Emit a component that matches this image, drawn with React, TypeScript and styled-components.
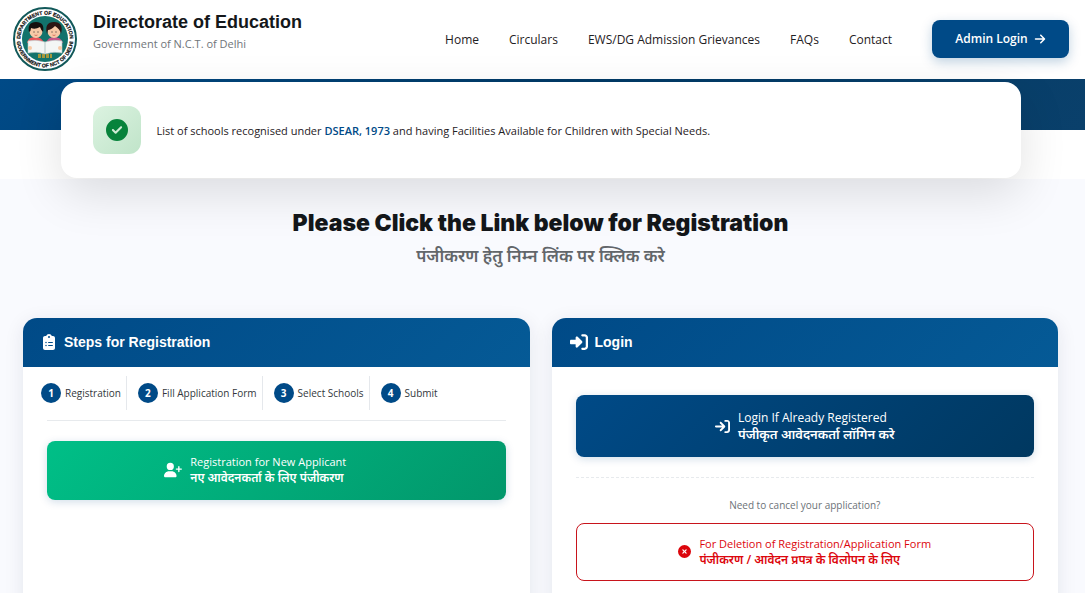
import React from 'react';
import styled, { createGlobalStyle } from 'styled-components';
import {
  FaArrowRight,
  FaArrowRightToBracket,
  FaCircleCheck,
  FaCircleXmark,
  FaClipboardList,
  FaRightToBracket,
  FaUserPlus,
} from 'react-icons/fa6';

const uiFont = '"Open Sans", "Noto Sans Devanagari", sans-serif';
const headingFont = '"Liberation Sans", Arial, sans-serif';

const GlobalStyle = createGlobalStyle`
  * { box-sizing: border-box; }
  body {
    margin: 0;
    background: #f9fafe;
    color: #1f2124;
    font-family: ${uiFont};
    font-size: 12px;
    line-height: 16px;
  }
  h1, h2, p, ol { margin: 0; padding: 0; }
  a { color: inherit; text-decoration: none; }
  button { font-family: inherit; cursor: pointer; }
  svg { flex: none; }
`;

const Header = styled.header`
  display: flex;
  align-items: center;
  justify-content: space-between;
  height: 79px;
  padding: 0 16px 2px 12px;
  background: #fff;
`;

const Brand = styled.a`
  display: flex;
  align-items: center;
  gap: 15px;
`;

const BrandText = styled.span`
  display: flex;
  flex-direction: column;
  padding-bottom: 14px;
`;

const BrandName = styled.span`
  font: 700 18px/24px ${headingFont};
  color: #14171a;
`;

const BrandSub = styled.span`
  font-size: 11px;
  line-height: 20px;
  font-weight: 500;
  color: #70757a;
`;

const Nav = styled.nav`
  display: flex;
  align-items: center;
  gap: 30px;
  font-weight: 500;

  a { padding-top: 2px; }
`;

const AdminButton = styled.button`
  display: flex;
  align-items: center;
  justify-content: center;
  gap: 6px;
  width: 137px;
  height: 38px;
  margin-left: 10px;
  border: 0;
  border-radius: 8px;
  background: #004a87;
  color: #fff;
  font-size: 12px;
  font-weight: 600;
  box-shadow: 0 4px 12px rgba(0, 74, 135, 0.25);
`;

const Hero = styled.section`
  padding: 3px 4px 1px 0;
  background: linear-gradient(135deg, #004a87 0%, #003a66 50%, #0a406b 100%) top / 100% 51px no-repeat #fff;
`;

const Notice = styled.div`
  position: relative;
  display: flex;
  align-items: center;
  gap: 16px;
  max-width: 960px;
  height: 96px;
  margin: 0 auto;
  padding: 0 32px;
  border-radius: 16px;
  background: #fff;
  font-size: 11px;
  font-weight: 500;
  box-shadow: 0 16px 48px rgba(0, 0, 0, 0.12);

  p { padding-top: 2px; }
  a { color: #004a87; font-weight: 600; }
`;

const NoticeIcon = styled.span`
  display: grid;
  place-items: center;
  width: 48px;
  height: 48px;
  border-radius: 12px;
  background: linear-gradient(135deg, #dcf3e1, #c0e4c9);
  color: #07833b;
`;

const Main = styled.main`
  padding: 32px 27px 32px 23px;
`;

const Title = styled.h1`
  font: 900 23px/24px Inter, "Arial Black", sans-serif;
  text-align: center;
  color: #14171a;
`;

const Subtitle = styled.p`
  margin-top: 7px;
  font-size: 17px;
  line-height: 28px;
  font-weight: 600;
  text-align: center;
  color: #62666a;
`;

const Columns = styled.div`
  display: grid;
  grid-template-columns: 1fr 1fr;
  gap: 22px;
  margin-top: 48px;
`;

const Card = styled.section`
  min-height: 320px;
  overflow: hidden;
  border-radius: 14px;
  background: #fff;
  box-shadow: 0 4px 20px rgba(0, 30, 70, 0.09);
`;

const CardHead = styled.h2`
  display: flex;
  align-items: center;
  gap: 7px;
  height: 49px;
  padding: 0 18px 1px;
  background: linear-gradient(135deg, #004a87, #055a96);
  color: #fff;
  font: 700 14px/20px ${headingFont};
`;

const CardBody = styled.div<{ $top: number }>`
  display: flex;
  flex-direction: column;
  padding: ${(p) => p.$top}px 24px 24px;
`;

const Steps = styled.ol`
  display: flex;
  margin: 0 -6px;
  list-style: none;
`;

const Step = styled.li`
  display: flex;
  align-items: center;
  gap: 4px;
  height: 34px;
  padding-right: 5px;
  font-size: 10px;
  color: #33373b;

  & + & {
    padding-left: 11px;
    border-left: 1px solid #e5e8ec;
  }
`;

const StepNumber = styled.span`
  display: grid;
  place-items: center;
  width: 20px;
  height: 20px;
  border-radius: 50%;
  background: #004a87;
  color: #fff;
  font-weight: 700;
`;

const Divider = styled.hr<{ $dashed?: boolean }>`
  width: 100%;
  margin: ${(p) => (p.$dashed ? '20px 0 19px' : '10px 0 20px')};
  border: 0;
  border-top: 1px ${(p) => (p.$dashed ? 'dashed' : 'solid')} #e7eaed;
`;

const tones = {
  green: 'padding: 0 42px 2px 0; border: 0; background: linear-gradient(135deg, #00bf87, #02976b); color: #fff; height: 59px; font-size: 11px; font-weight: 500;',
  blue: 'padding: 0; border: 0; background: linear-gradient(135deg, #004a87, #003860); color: #fff; height: 62px; font-size: 12px; font-weight: 500;',
  red: 'padding: 0 0 1px; border: 1px solid #c8141c; background: #fff; color: #dc060c; height: 58px; font-size: 11px; font-weight: 500;',
};

const ActionButton = styled.button<{ $tone: keyof typeof tones }>`
  display: flex;
  align-items: center;
  justify-content: center;
  gap: 8px;
  width: 100%;
  border-radius: 8px;
  text-align: left;
  line-height: 16px;
  ${(p) => tones[p.$tone]}
  ${(p) => p.$tone !== 'red' && 'box-shadow: 0 2px 8px rgba(0, 74, 135, 0.18);'}
`;

const Lines = styled.span`
  display: flex;
  flex-direction: column;
`;

const Hindi = styled.span<{ $size: number }>`
  font-size: ${(p) => p.$size}px;
  font-weight: 600;
`;

const Hint = styled.p`
  margin-bottom: 10px;
  font-size: 10px;
  text-align: center;
  color: #6c7278;
`;

const EmblemArt = styled.svg`
  overflow: visible;
`;

const Emblem = () => (
  <EmblemArt width="66" height="66" viewBox="0 0 66 66" role="img" aria-label="Department of Education emblem">
    <defs>
      <path id="ringTop" d="M9.500 41 A24.7 24.7 0 1 1 56.500 41" />
      <path id="ringBottom" d="M4.700 33 A28.3 28.3 0 0 0 61.300 33" />
    </defs>
    <circle cx="33" cy="33" r="31" fill="#fff" stroke="#12595a" strokeWidth="2" />
    <circle cx="33" cy="33" r="23" fill="#12736c" />
    <g fontFamily="Liberation Sans, sans-serif" fontWeight="700" fontSize="5.200" fill="#111" stroke="#111" strokeWidth=".2">
      <text textAnchor="middle"><textPath href="#ringTop" startOffset="50%">DEPARTMENT OF EDUCATION</textPath></text>
      <text textAnchor="middle"><textPath href="#ringBottom" startOffset="50%">GOVERNMENT OF NCT OF DELHI</textPath></text>
    </g>
    <path d="M15 37 Q16 31 23 31 Q30 31 32 37 Z" fill="#e8555a" />
    <path d="M34 37 Q36 31 42 31 Q49 31 51 37 Z" fill="#c65788" />
    <circle cx="24" cy="25.500" r="6.500" fill="#f7c9a6" />
    <circle cx="42" cy="25.500" r="6.500" fill="#f7c9a6" />
    <path d="M17 26 Q15 16 24 16 Q33 16 31 26 Q29 24 28 21 Q23 24 19 22 Q19 25 17 26 Z" fill="#16110f" />
    <path d="M35 28 Q32 16 42 16 Q52 16 49 28 Q48 23 43 20 Q39 24 36 24 Z" fill="#2c1614" />
    <path d="M21.500 26 h1 M25.500 26 h1 M39.500 26 h1 M43.500 26 h1" stroke="#222" />
    <path d="M22.500 29 q1.500 1 3 0 M40.500 29 q1.500 1 3 0" stroke="#cc5148" fill="none" strokeWidth=".7" />
    <path d="M16 35 Q25 33 33 36 V48 Q25 45 16 47 Z M33 36 Q42 33 50 35 V47 Q42 45 33 48 Z" fill="#f4f6f5" stroke="#bac9c8" strokeWidth=".6" />
    <circle cx="18" cy="42" r="2" fill="#f7c9a6" />
    <circle cx="48" cy="42" r="2" fill="#f7c9a6" />
    <path d="M26 49 h14 M26 51 h14" stroke="#d8a52c" strokeWidth="1.500" strokeDasharray="3 1" />
  </EmblemArt>
);

export default function App() {
  return (
    <>
      <GlobalStyle />
      <Header>
        <Brand href="#">
          <Emblem />
          <BrandText>
            <BrandName>Directorate of Education</BrandName>
            <BrandSub>Government of N.C.T. of Delhi</BrandSub>
          </BrandText>
        </Brand>
        <Nav>
          <a href="#">Home</a>
          <a href="#">Circulars</a>
          <a href="#">EWS/DG Admission Grievances</a>
          <a href="#">FAQs</a>
          <a href="#">Contact</a>
          <AdminButton type="button">
            Admin Login <FaArrowRight size={12} />
          </AdminButton>
        </Nav>
      </Header>
      <Hero>
        <Notice>
          <NoticeIcon><FaCircleCheck size={22} /></NoticeIcon>
          <p>
            List of schools recognised under <a href="#">DSEAR, 1973</a> and having Facilities Available for Children with Special Needs.
          </p>
        </Notice>
      </Hero>
      <Main>
        <Title>Please Click the Link below for Registration</Title>
        <Subtitle lang="hi">पंजीकरण हेतु निम्न लिंक पर क्लिक करे</Subtitle>
        <Columns>
          <Card>
            <CardHead><FaClipboardList size={16} /> Steps for Registration</CardHead>
            <CardBody $top={9}>
              <Steps>
                {['Registration', 'Fill Application Form', 'Select Schools', 'Submit'].map((label, i) => (
                  <Step key={label}><StepNumber>{i + 1}</StepNumber>{label}</Step>
                ))}
              </Steps>
              <Divider />
              <ActionButton type="button" $tone="green">
                <FaUserPlus size={18} />
                <Lines>
                  <span>Registration for New Applicant</span>
                  <Hindi $size={12} lang="hi">नए आवेदनकर्ता के लिए पंजीकरण</Hindi>
                </Lines>
              </ActionButton>
            </CardBody>
          </Card>
          <Card>
            <CardHead><FaRightToBracket size={18} /> Login</CardHead>
            <CardBody $top={28}>
              <ActionButton type="button" $tone="blue">
                <FaArrowRightToBracket size={15} />
                <Lines>
                  <span>Login If Already Registered</span>
                  <Hindi $size={13} lang="hi">पंजीकृत आवेदनकर्ता लॉगिन करे</Hindi>
                </Lines>
              </ActionButton>
              <Divider $dashed />
              <Hint>Need to cancel your application?</Hint>
              <ActionButton type="button" $tone="red">
                <FaCircleXmark size={13} />
                <Lines>
                  <span>For Deletion of Registration/Application Form</span>
                  <Hindi $size={12} lang="hi">पंजीकरण / आवेदन प्रपत्र के विलोपन के लिए</Hindi>
                </Lines>
              </ActionButton>
            </CardBody>
          </Card>
        </Columns>
      </Main>
    </>
  );
}
